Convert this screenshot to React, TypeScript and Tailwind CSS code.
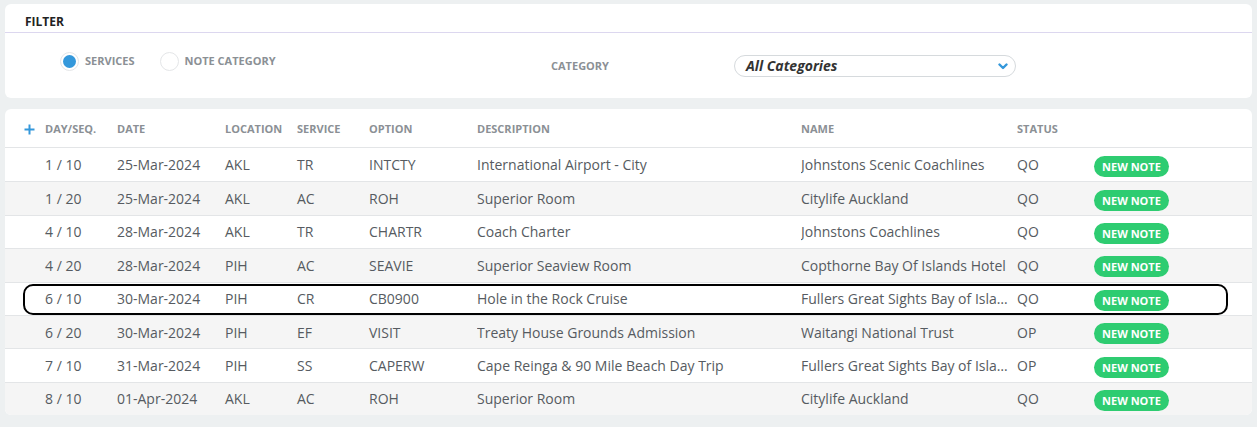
import React from 'react';

const rows = [
  { seq: '1 / 10', date: '25-Mar-2024', loc: 'AKL', svc: 'TR', opt: 'INTCTY', desc: 'International Airport - City', name: 'Johnstons Scenic Coachlines', status: 'QO' },
  { seq: '1 / 20', date: '25-Mar-2024', loc: 'AKL', svc: 'AC', opt: 'ROH', desc: 'Superior Room', name: 'Citylife Auckland', status: 'QO' },
  { seq: '4 / 10', date: '28-Mar-2024', loc: 'AKL', svc: 'TR', opt: 'CHARTR', desc: 'Coach Charter', name: 'Johnstons Coachlines', status: 'QO' },
  { seq: '4 / 20', date: '28-Mar-2024', loc: 'PIH', svc: 'AC', opt: 'SEAVIE', desc: 'Superior Seaview Room', name: 'Copthorne Bay Of Islands Hotel', status: 'QO' },
  { seq: '6 / 10', date: '30-Mar-2024', loc: 'PIH', svc: 'CR', opt: 'CB0900', desc: 'Hole in the Rock Cruise', name: 'Fullers Great Sights Bay of Islands', status: 'QO', focused: true },
  { seq: '6 / 20', date: '30-Mar-2024', loc: 'PIH', svc: 'EF', opt: 'VISIT', desc: 'Treaty House Grounds Admission', name: 'Waitangi National Trust', status: 'OP' },
  { seq: '7 / 10', date: '31-Mar-2024', loc: 'PIH', svc: 'SS', opt: 'CAPERW', desc: 'Cape Reinga & 90 Mile Beach Day Trip', name: 'Fullers Great Sights Bay of Islands', status: 'OP' },
  { seq: '8 / 10', date: '01-Apr-2024', loc: 'AKL', svc: 'AC', opt: 'ROH', desc: 'Superior Room', name: 'Citylife Auckland', status: 'QO' },
];

const Radio: React.FC<{ checked?: boolean; label: string }> = ({ checked, label }) => (
  <label className="flex items-center gap-[6px]">
    <span className="w-[19px] h-[19px] rounded-full border border-[#e4e6e8] bg-white flex items-center justify-center">
      {checked && <span className="w-[13px] h-[13px] rounded-full bg-[#3498db]" />}
    </span>
    <span className="text-[11px] font-bold text-[#8b9095]">{label}</span>
  </label>
);

const App: React.FC = () => {
  return (
    <div
      className="min-h-[427px] bg-[#edf0f1] px-[5px] pt-[4px] pb-[11px] flex flex-col gap-[11px]"
      style={{ fontFamily: '"Open Sans", "Noto Sans", sans-serif' }}
    >
      {/* Filter */}
      <div className="bg-white rounded-[6px] h-[94px]">
        <div className="h-[29px] flex items-end pl-[20px] pb-[1px] border-b border-[#dcd7ef]">
          <span className="text-[12px] font-bold text-[#222]">FILTER</span>
        </div>
        <div className="flex">
          <div className="flex items-center gap-[25px] pl-[55px] pt-[19px] w-[520px] self-start">
            <Radio checked label="SERVICES" />
            <Radio label="NOTE CATEGORY" />
          </div>
          <div className="flex items-center pt-[22px]">
            <span className="w-[209px] pl-[26px] pt-[1px] text-[11px] font-bold text-[#8b9095]">CATEGORY</span>
            <div className="w-[282px] h-[22px] rounded-full border border-[#d6dadd] flex items-center justify-between pl-[11px] pr-[7px]">
              <span className="text-[14px] italic font-bold text-[#333] leading-none">All Categories</span>
              <svg width="10" height="7" viewBox="0 0 10 7">
                <path d="M1.5 1.5 L5 5 L8.5 1.5" fill="none" stroke="#3498db" strokeWidth="2.4" strokeLinecap="round" strokeLinejoin="round" />
              </svg>
            </div>
          </div>
        </div>
      </div>

      {/* Table */}
      <div className="bg-white rounded-[6px] overflow-hidden">
        <div className="flex items-center h-[39px] pt-[3px] text-[11px] font-bold text-[#8b9095] border-b border-[#e3e5e7]">
          <div className="w-[40px] pl-[19px] flex items-center">
            <svg width="11" height="11" viewBox="0 0 11 11">
              <path d="M5.5 0.5 V10.5 M0.5 5.5 H10.5" stroke="#3498db" strokeWidth="2" />
            </svg>
          </div>
          <div className="w-[72px]">DAY/SEQ.</div>
          <div className="w-[108px]">DATE</div>
          <div className="w-[72px]">LOCATION</div>
          <div className="w-[72px]">SERVICE</div>
          <div className="w-[108px]">OPTION</div>
          <div className="w-[324px]">DESCRIPTION</div>
          <div className="w-[216px]">NAME</div>
          <div className="w-[77px]">STATUS</div>
        </div>
        {rows.map((r, i) => (
          <div
            key={i}
            className={`relative flex items-center h-[33.4px] text-[14px] text-[#565b61] ${i > 0 ? 'border-t border-[#e3e5e7]' : ''} ${i % 2 === 1 ? 'bg-[#f5f5f5]' : 'bg-white'}`}
          >
            <div className="w-[40px]" />
            <div className="w-[72px]">{r.seq}</div>
            <div className="w-[108px]">{r.date}</div>
            <div className="w-[72px]">{r.loc}</div>
            <div className="w-[72px]">{r.svc}</div>
            <div className="w-[108px]">{r.opt}</div>
            <div className="w-[324px] truncate">{r.desc}</div>
            <div className="w-[216px] pr-[5px] truncate">{r.name}</div>
            <div className="w-[77px]">{r.status}</div>
            <button className="h-[21px] w-[75px] rounded-full bg-[#2ecc71] text-white text-[11px] font-bold leading-none mt-[3px]">
              NEW NOTE
            </button>
            {r.focused && (
              <span className="absolute left-[18px] top-[1px] w-[1205px] h-[31px] rounded-[10px] border-2 border-black pointer-events-none" />
            )}
          </div>
        ))}
      </div>
    </div>
  );
};

export default App;
